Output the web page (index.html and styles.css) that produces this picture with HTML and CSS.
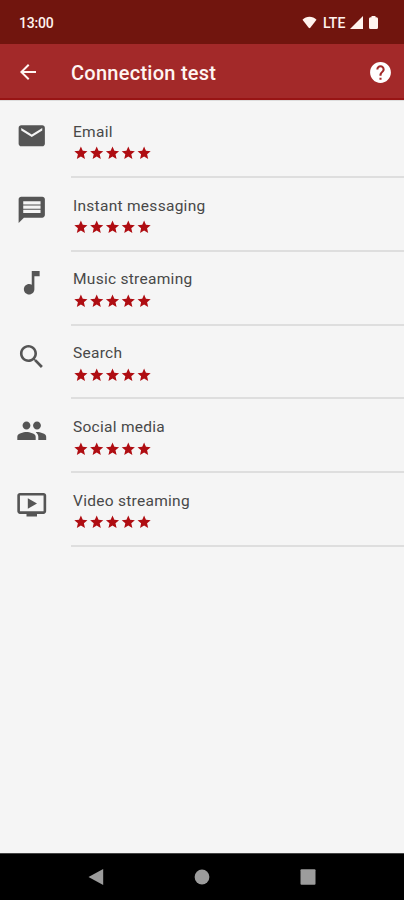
FILE: index.html
```html
<!DOCTYPE html>
<html lang="en">
<head>
<meta charset="utf-8">
<title>Connection test</title>
<link rel="stylesheet" href="styles.css">
</head>
<body>
<svg width="0" height="0" class="defs">
  <defs>
    <symbol id="star" viewBox="0 0 24 24"><path d="M12 17.27L18.18 21l-1.64-7.03L22 9.24l-7.19-.61L12 2 9.19 8.63 2 9.24l5.46 4.73L5.82 21z"/></symbol>
    <symbol id="stars" viewBox="0 0 79 16">
      <use href="#star" x="0" width="15.8" height="16"/><use href="#star" x="15.8" width="15.8" height="16"/><use href="#star" x="31.6" width="15.8" height="16"/><use href="#star" x="47.4" width="15.8" height="16"/><use href="#star" x="63.2" width="15.8" height="16"/>
    </symbol>
  </defs>
</svg>
<div class="screen">
  <header class="status">
    <span class="time">13:00</span>
    <div class="signals">
      <svg class="wifi" viewBox="0 0 15 13"><path d="M.5 3.8C4-.3 11-.3 14.500 3.800L8.300 11.800q-.8.900-1.600 0z"/></svg>
      <span class="lte">LTE</span>
      <svg class="cell" viewBox="0 0 13 13"><path d="M13 0v13H0z"/></svg>
      <svg class="battery" viewBox="0 0 9 13"><path d="M2.500 1.200V0h4v1.200h1q1.500 0 1.500 1.500v8.800Q9 13 7.500 13h-6Q0 13 0 11.500V2.700q0-1.500 1.500-1.500z"/></svg>
    </div>
  </header>
  <div class="appbar">
    <svg class="back" viewBox="0 0 24 24"><path d="M20 11H7.830l5.590-5.590L12 4l-8 8 8 8 1.410-1.410L7.830 13H20v-2z"/></svg>
    <h1>Connection test</h1>
    <svg class="help" viewBox="0 0 24 24"><path d="M12 2C6.480 2 2 6.480 2 12s4.480 10 10 10 10-4.480 10-10S17.520 2 12 2zm1 17h-2v-2h2v2zm2.070-7.750l-.9.920C13.450 12.900 13 13.500 13 15h-2v-.5c0-1.100.45-2.100 1.170-2.830l1.240-1.260c.37-.36.59-.86.59-1.410 0-1.100-.9-2-2-2s-2 .9-2 2H8c0-2.210 1.790-4 4-4s4 1.790 4 4c0 .88-.36 1.680-.93 2.250z"/></svg>
  </div>
  <ul class="list">
    <li><svg class="icon" viewBox="0 0 24 24"><path d="M20 4H4c-1.100 0-1.990.9-1.990 2L2 18c0 1.100.9 2 2 2h16c1.100 0 2-.9 2-2V6c0-1.100-.9-2-2-2zm0 4l-8 5-8-5V6l8 5 8-5v2z"/></svg><div class="body"><span class="label">Email</span><svg class="stars"><use href="#stars"/></svg></div></li>
    <li><svg class="icon" viewBox="0 0 24 24"><path d="M20 2H4c-1.100 0-1.990.9-1.990 2L2 22l4-4h14c1.100 0 2-.9 2-2V4c0-1.100-.9-2-2-2zm-1.300 12.400H5.500V12h13.200v2.400zm0-3.200H5.500V8.800h13.200v2.400zm0-3.200H5.500V5.600h13.200V8z"/></svg><div class="body"><span class="label">Instant messaging</span><svg class="stars"><use href="#stars"/></svg></div></li>
    <li><svg class="icon" viewBox="0 0 24 24"><path d="M12 3v10.550c-.59-.34-1.270-.55-2-.55-2.210 0-4 1.790-4 4s1.790 4 4 4 4-1.790 4-4V7h4V3h-6z"/></svg><div class="body"><span class="label">Music streaming</span><svg class="stars"><use href="#stars"/></svg></div></li>
    <li><svg class="icon" viewBox="0 0 24 24"><path d="M15.500 14h-.79l-.28-.27C15.410 12.590 16 11.110 16 9.500 16 5.910 13.090 3 9.500 3S3 5.910 3 9.500 5.910 16 9.500 16c1.610 0 3.090-.59 4.230-1.570l.27.280v.79l5 4.990L20.490 19l-4.990-5zm-6 0C7.010 14 5 11.990 5 9.500S7.010 5 9.500 5 14 7.010 14 9.500 11.990 14 9.500 14z"/></svg><div class="body"><span class="label">Search</span><svg class="stars"><use href="#stars"/></svg></div></li>
    <li><svg class="icon" viewBox="0 0 24 24"><path d="M16 11c1.660 0 2.990-1.340 2.990-3S17.660 5 16 5c-1.660 0-3 1.340-3 3s1.340 3 3 3zm-8 0c1.660 0 2.990-1.340 2.990-3S9.660 5 8 5C6.340 5 5 6.340 5 8s1.340 3 3 3zm0 2c-2.330 0-7 1.170-7 3.500V19h14v-2.500c0-2.330-4.670-3.500-7-3.500zm8 0c-.29 0-.62.020-.97.050 1.160.84 1.970 1.970 1.970 3.450V19h6v-2.500c0-2.330-4.670-3.500-7-3.500z"/></svg><div class="body"><span class="label">Social media</span><svg class="stars"><use href="#stars"/></svg></div></li>
    <li><svg class="icon" viewBox="0 0 24 24"><path d="M21 3H3c-1.110 0-2 .89-2 2v12c0 1.100.89 2 2 2h5v2h8v-2h5c1.100 0 1.990-.9 1.990-2L23 5c0-1.110-.9-2-2-2zm0 14H3V5h18v12zm-5-6l-7 4V7z"/></svg><div class="body"><span class="label">Video streaming</span><svg class="stars"><use href="#stars"/></svg></div></li>
  </ul>
  <nav class="navbar">
    <svg viewBox="0 0 16 16"><path d="M.5 8L15.200 0v16z"/></svg>
    <svg viewBox="0 0 16 16"><circle cx="8" cy="8" r="7.400"/></svg>
    <svg viewBox="0 0 16 16"><rect x=".5" y=".3" width="15" height="15.400" rx="1"/></svg>
  </nav>
</div>
</body>
</html>
```
FILE: styles.css
```css
* { box-sizing: border-box; }
body { margin: 0; font-family: Roboto, "Liberation Sans", sans-serif; background: #f5f5f5; }
.defs { display: none; }
.screen { width: 404px; height: 900px; display: flex; flex-direction: column; overflow: hidden; }
svg { display: block; flex: none; }

.status { height: 44px; flex: none; background: #71150e; color: #fff3ee; display: flex; align-items: center; justify-content: space-between; padding: 1px 26px 0 19px; }
.time { font-size: 14px; font-weight: 500; letter-spacing: -0.2px; }
.signals { display: flex; align-items: center; fill: #fff3ee; }
.wifi { width: 15px; height: 13px; }
.lte { font-size: 14px; font-weight: 500; line-height: 16px; margin-left: 6px; width: 24px; }
.cell { width: 13px; height: 13px; margin-left: 3px; }
.battery { width: 9px; height: 13px; margin-left: 6px; }

.appbar { height: 56px; flex: none; background: #a32929; border-bottom: 2px solid #981414; color: #fff5f2; fill: #fff5f2; display: flex; align-items: center; padding: 2px 11px 0 16px; }
.back { width: 24px; height: 24px; }
h1 { margin: 2px 0 0 31px; font-size: 20px; line-height: 24px; font-weight: 500; letter-spacing: 0.26px; flex: 1; }
.help { width: 25px; height: 25px; fill: #fff; }

.list { list-style: none; margin: 0; padding: 3px 0 0; flex: 1; border-top: 1px solid #ddd; }
.list li { height: 73.850px; display: flex; }
.icon { width: 31.500px; height: 31.500px; margin: 15.700px 23.500px 0 16px; fill: #555; }
.body { flex: 1; border-bottom: 2px solid #dedede; padding: 17.700px 0 0 2px; }
.label { display: block; font-size: 15.500px; line-height: 20px; letter-spacing: 0.280px; color: #484848; }
.stars { width: 79px; height: 16px; margin-top: 3.500px; margin-left: -0.300px; fill: #af0d12; }

.navbar { height: 47px; flex: none; background: #000; border-top: 1px solid #444; display: flex; justify-content: space-between; align-items: center; padding: 0 88px; fill: #9c9c9c; }
.navbar svg { width: 16px; height: 16px; }
```
